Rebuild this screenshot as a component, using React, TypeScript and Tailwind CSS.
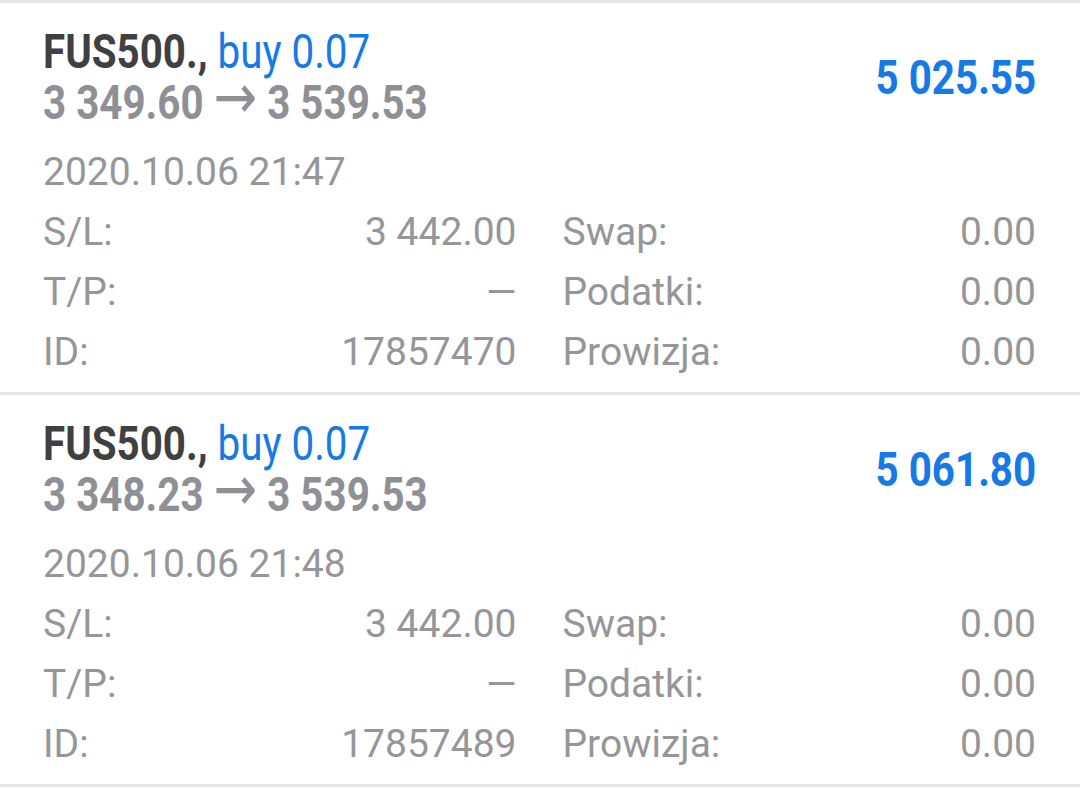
const trades = [
  {
    symbol: 'FUS500.,',
    side: 'buy 0.07',
    open: '3 349.60',
    close: '3 539.53',
    profit: '5 025.55',
    time: '2020.10.06 21:47',
    sl: '3 442.00',
    tp: '—',
    id: '17857470',
  },
  {
    symbol: 'FUS500.,',
    side: 'buy 0.07',
    open: '3 348.23',
    close: '3 539.53',
    profit: '5 061.80',
    time: '2020.10.06 21:48',
    sl: '3 442.00',
    tp: '—',
    id: '17857489',
  },
];

function Row({ label, value }: { label: string; value: string }) {
  return (
    <div className="flex justify-between">
      <span>{label}</span>
      <span>{value}</span>
    </div>
  );
}

function TradeCard({ t }: { t: (typeof trades)[number] }) {
  return (
    <div className="h-[392px] border-b-[3px] border-[#e6e6e6] pt-[23px] pl-[43px] pr-[44px]">
      <div className="flex items-center justify-between font-bold text-[48px] leading-[51px]">
        <div className="flex flex-col">
          <span className="inline-block origin-left scale-x-[0.84] whitespace-nowrap">
            <span className="text-[#404040]">{t.symbol}</span>{' '}
            <span className="font-normal text-[#1579e6]">{t.side}</span>
          </span>
          <span className="inline-block h-[51px] origin-left scale-x-[0.84] whitespace-nowrap text-[#8f9095]">
            {t.open}{' '}
            <span className="relative -top-[1px] font-['DejaVu_Sans',sans-serif] text-[62px] font-normal leading-[20px]">→</span>{' '}
            {t.close}
          </span>
        </div>
        <span className="inline-block origin-right scale-x-[0.84] whitespace-nowrap text-[#1579e6]">
          {t.profit}
        </span>
      </div>
      <div className="mt-[14px] text-[39px] leading-[60px] text-[#969699]">
        <div>{t.time}</div>
        <div className="grid grid-cols-2 gap-x-[46px]">
          <Row label="S/L:" value={t.sl} />
          <Row label="Swap:" value="0.00" />
          <Row label="T/P:" value={t.tp} />
          <Row label="Podatki:" value="0.00" />
          <Row label="ID:" value={t.id} />
          <Row label="Prowizja:" value="0.00" />
        </div>
      </div>
    </div>
  );
}

export default function App() {
  return (
    <div className="min-h-[790px] w-full bg-white font-['Roboto',sans-serif]">
      <div className="h-[3px] bg-[#e6e6e6]" />
      {trades.map((t) => (
        <TradeCard key={t.id} t={t} />
      ))}
    </div>
  );
}
